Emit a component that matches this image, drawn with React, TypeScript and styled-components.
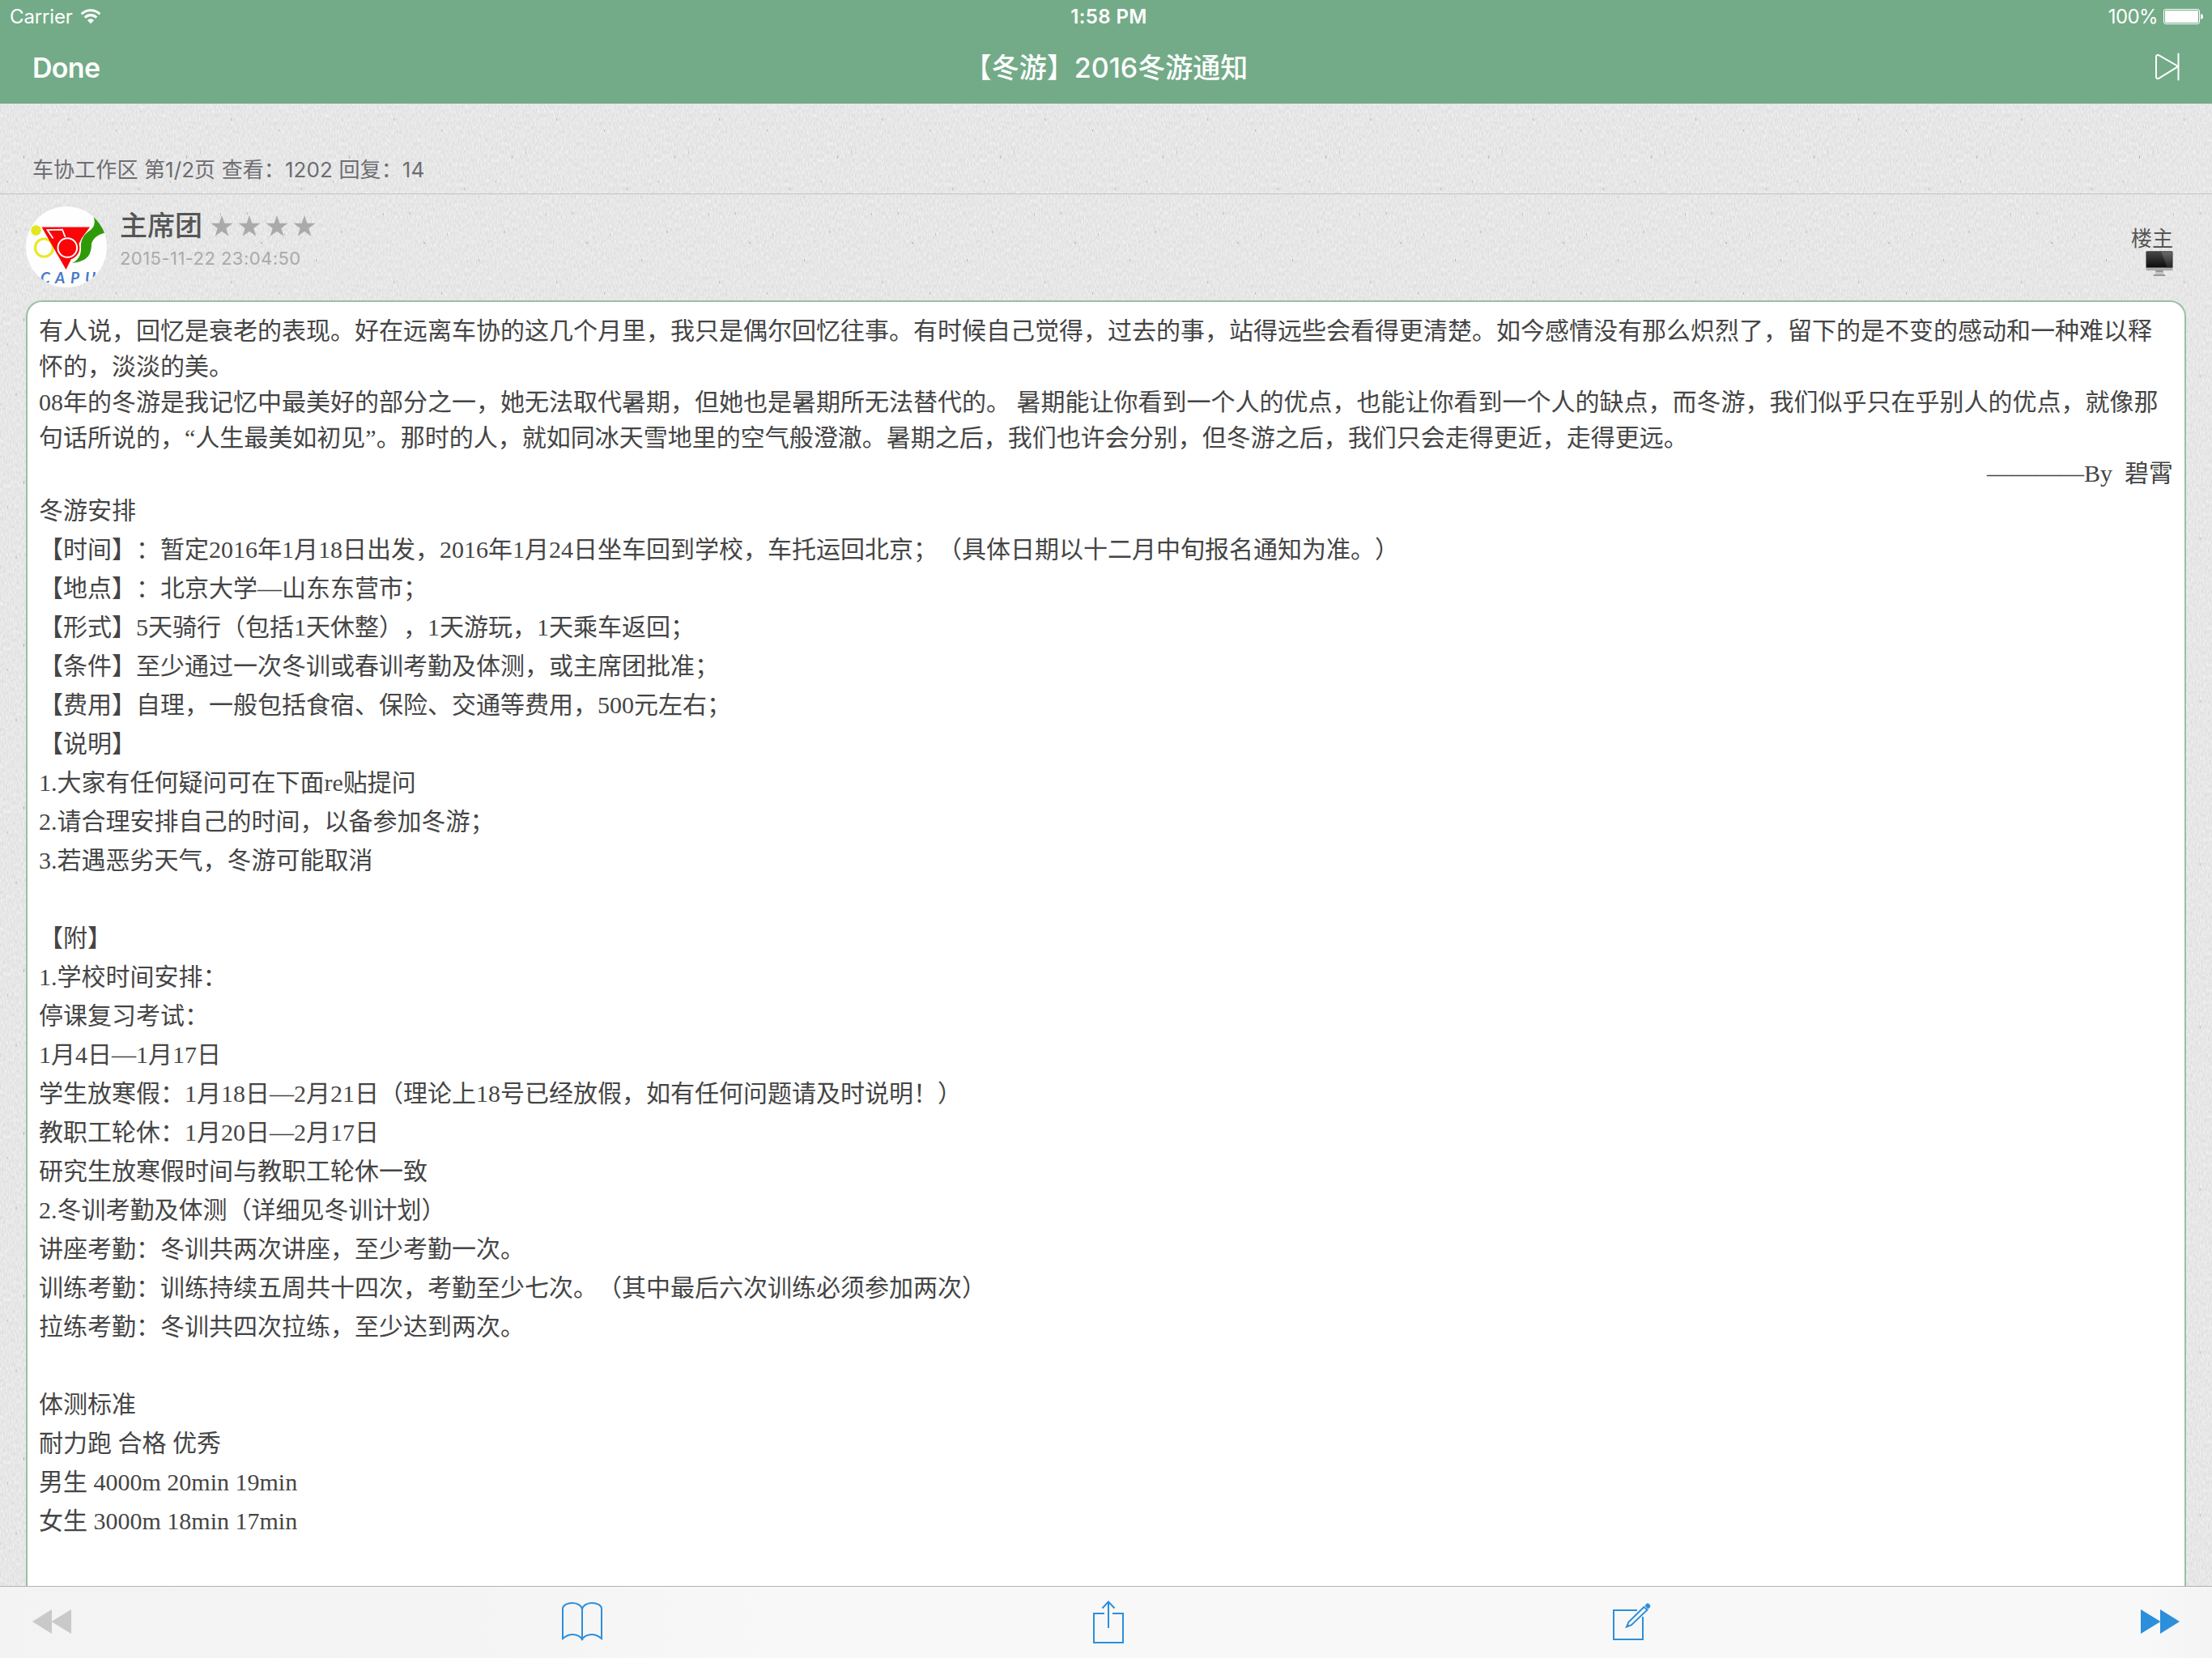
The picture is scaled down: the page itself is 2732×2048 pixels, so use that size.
import React from "react";
import styled, { createGlobalStyle } from "styled-components";

const paper = encodeURIComponent(
  `<svg xmlns="http://www.w3.org/2000/svg" width="201" height="201">
    <filter id="f" x="0" y="0" width="100%" height="100%" color-interpolation-filters="sRGB">
      <feTurbulence type="fractalNoise" baseFrequency="0.62 0.2" numOctaves="2" seed="8" stitchTiles="stitch"/>
      <feColorMatrix values="0.13 0 0 0 0.839  0.13 0 0 0 0.839  0.13 0 0 0 0.839  0 0 0 0 1"/>
    </filter>
    <rect width="201" height="201" filter="url(#f)"/>
    <g fill="#000">
      <rect x="9" y="22" width="1" height="3" opacity=".14"/><rect x="71" y="62" width="1" height="3" opacity=".2"/>
      <rect x="104" y="61" width="1" height="3" opacity=".18"/><rect x="19" y="84" width="2" height="3" opacity=".12"/>
      <rect x="150" y="87" width="1" height="3" opacity=".16"/><rect x="121" y="98" width="2" height="2" opacity=".18"/>
      <rect x="189" y="119" width="1" height="3" opacity=".2"/><rect x="46" y="186" width="1" height="4" opacity=".16"/>
      <rect x="143" y="160" width="1" height="3" opacity=".22"/><rect x="29" y="192" width="1" height="4" opacity=".2"/>
      <rect x="84" y="146" width="1" height="3" opacity=".16"/><rect x="171" y="31" width="1" height="3" opacity=".16"/>
    </g>
  </svg>`
);

const Global = createGlobalStyle`
  html, body { margin: 0; padding: 0; overflow: hidden; }
  * { box-sizing: border-box; }
`;

const ui = `Inter, "Noto Sans CJK SC", sans-serif`;
const blue = "#2c8fdc";

const Screen = styled.div`
  width: 2732px;
  height: 2048px;
  overflow: hidden;
  display: flex;
  flex-direction: column;
  background: #e6e6e6 url("data:image/svg+xml,${paper}");
  font-family: ${ui};
  text-spacing-trim: space-all;
`;

const Header = styled.header`
  flex: none;
  height: 128px;
  background: #73ab88;
  color: #fff;
`;

const Bar = styled.div<{ $h: number; $pad: string }>`
  height: ${(p) => p.$h}px;
  padding: ${(p) => p.$pad};
  display: grid;
  grid-template-columns: 1fr auto 1fr;
  align-items: center;
`;

const Side = styled.div<{ $end?: boolean; $gap?: number }>`
  display: flex;
  align-items: center;
  justify-content: ${(p) => (p.$end ? "flex-end" : "flex-start")};
  gap: ${(p) => p.$gap ?? 0}px;
`;

const StatusText = styled.span<{ $bold?: boolean; $track?: number }>`
  font-size: 24px;
  line-height: 38px;
  padding-top: 2px;
  font-weight: ${(p) => (p.$bold ? 600 : 400)};
  letter-spacing: ${(p) => p.$track ?? 0}px;
  white-space: nowrap;
`;

const Clock = styled(StatusText)`
  padding-left: 6px;
`;

const NavText = styled.span<{ $track?: number }>`
  font-size: 34px;
  line-height: 88px;
  font-weight: 600;
  letter-spacing: ${(p) => p.$track ?? 0}px;
  white-space: nowrap;
`;

const Title = styled(NavText)`
  font-weight: 500;
`;

const Info = styled.div`
  flex: none;
  height: 112px;
  padding: 64px 40px 0;
  border-bottom: 1px solid #c3c3c4;
  color: #6d6d72;
  font-size: 26px;
  line-height: 36px;
  letter-spacing: 0.1px;
  white-space: nowrap;
`;

const Author = styled.div`
  flex: none;
  height: 131px;
  padding: 15px 48px 0 32px;
  display: flex;
`;

const Avatar = styled.svg`
  flex: none;
  width: 100px;
  height: 100px;
  border-radius: 50%;
`;

const Who = styled.div`
  flex: 1;
  padding-left: 16px;
`;

const NameRow = styled.div`
  display: flex;
  align-items: center;
  height: 48px;
  gap: 10px;
`;

const Name = styled.span`
  font-size: 34px;
  line-height: 48px;
  font-weight: 500;
  color: #555;
`;

const Stars = styled.div`
  display: flex;
  gap: 6px;
`;

const Stamp = styled.div`
  margin-top: 2px;
  color: #aaa;
  font-size: 22px;
  line-height: 28px;
  letter-spacing: 0.45px;
`;

const Floor = styled.div`
  display: flex;
  flex-direction: column;
  align-items: flex-end;
  padding-top: 24px;
  color: #555;
  font-size: 26px;
  line-height: 31px;
`;

const Post = styled.article`
  flex: 1;
  min-height: 0;
  margin: 0 32px;
  padding: 14px 14px 0;
  overflow: hidden;
  background: #fff;
  border: 2px solid #98c0a6;
  border-bottom: 0;
  border-radius: 20px 20px 0 0;
  color: #454545;
  font-family: "Liberation Serif", "Noto Sans CJK SC", serif;
  font-size: 30px;
`;

const Line = styled.p<{ $loose?: boolean; $right?: boolean }>`
  margin: 0;
  height: ${(p) => (p.$loose ? 48 : 44)}px;
  line-height: ${(p) => (p.$loose ? 48 : 44)}px;
  text-align: ${(p) => (p.$right ? "right" : "left")};
  white-space: pre;
`;

const Toolbar = styled.footer`
  flex: none;
  height: 89px;
  padding: 0 40px;
  border-top: 1px solid #b2b2b2;
  background: linear-gradient(90deg, #f3f3f3 0, #f4f4f4 500px, #f8f8f8 1000px, #f8f8f8 2650px, #f4f4f4 100%);
  display: flex;
  justify-content: space-between;
`;

const ToolIcon = styled.svg`
  flex: none;
  height: 88px;
  overflow: visible;
  fill: none;
`;

const intro = [
  "有人说，回忆是衰老的表现。好在远离车协的这几个月里，我只是偶尔回忆往事。有时候自己觉得，过去的事，站得远些会看得更清楚。如今感情没有那么炽烈了，留下的是不变的感动和一种难以释",
  "怀的，淡淡的美。",
  "08年的冬游是我记忆中最美好的部分之一，她无法取代暑期，但她也是暑期所无法替代的。 暑期能让你看到一个人的优点，也能让你看到一个人的缺点，而冬游，我们似乎只在乎别人的优点，就像那",
  "句话所说的，“人生最美如初见”。那时的人，就如同冰天雪地里的空气般澄澈。暑期之后，我们也许会分别，但冬游之后，我们只会走得更近，走得更远。",
];

const body = [
  "冬游安排",
  "【时间】：暂定2016年1月18日出发，2016年1月24日坐车回到学校，车托运回北京；（具体日期以十二月中旬报名通知为准。）",
  "【地点】：北京大学—山东东营市；",
  "【形式】5天骑行（包括1天休整），1天游玩，1天乘车返回；",
  "【条件】至少通过一次冬训或春训考勤及体测，或主席团批准；",
  "【费用】自理，一般包括食宿、保险、交通等费用，500元左右；",
  "【说明】",
  "1.大家有任何疑问可在下面re贴提问",
  "2.请合理安排自己的时间，以备参加冬游；",
  "3.若遇恶劣天气，冬游可能取消",
  "",
  "【附】",
  "1.学校时间安排：",
  "停课复习考试：",
  "1月4日—1月17日",
  "学生放寒假：1月18日—2月21日（理论上18号已经放假，如有任何问题请及时说明！）",
  "教职工轮休：1月20日—2月17日",
  "研究生放寒假时间与教职工轮休一致",
  "2.冬训考勤及体测（详细见冬训计划）",
  "讲座考勤：冬训共两次讲座，至少考勤一次。",
  "训练考勤：训练持续五周共十四次，考勤至少七次。（其中最后六次训练必须参加两次）",
  "拉练考勤：冬训共四次拉练，至少达到两次。",
  "",
  "体测标准",
  "耐力跑 合格 优秀",
  "男生 4000m 20min 19min",
  "女生 3000m 18min 17min",
];

const Wifi = () => (
  <svg width="26" height="20" viewBox="0 0 26 20" fill="none" stroke="#fff" strokeWidth="3.2">
    <path d="M1.7 7.4a16 16 0 0 1 22.6 0" />
    <path d="M5.8 11.7a10.2 10.2 0 0 1 14.4 0" />
    <path d="M13 19.2 8.9 14.9a5.8 5.8 0 0 1 8.2 0z" fill="#fff" stroke="none" />
  </svg>
);

const Battery = () => (
  <svg width="49" height="19" viewBox="0 0 49 19">
    <rect x="0.5" y="0.5" width="44" height="18" rx="2.5" fill="none" stroke="#fff" />
    <rect x="2" y="2" width="41" height="15" rx="1" fill="#fff" />
    <path d="M46 6.2c2 .2 3 1.6 3 3.3s-1 3.100-3 3.300z" fill="#fff" />
  </svg>
);

const SkipToEnd = () => (
  <svg width="32" height="38" viewBox="0 0 32 38" fill="none" stroke="#fff" strokeWidth="2" strokeLinecap="round" strokeLinejoin="round">
    <path d="M3 5.500c0-2.400 1.600-3.300 3.600-2.200L28.500 16c1.300.8 1.300 1.400 0 2.200L6.600 31.700C4.600 32.800 3 32 3 29.500z" />
    <path d="M30.500 1.500v32" />
  </svg>
);

const Star = () => (
  <svg width="28" height="26" viewBox="0 0 28 26">
    <path fill="#aaa" d="M14 0l3.300 9.800H27.500L19.300 15.900l3.100 9.900L14 19.700l-8.400 6.100 3.100-9.900L.5 9.800h10.200z" />
  </svg>
);

const Club = () => (
  <Avatar viewBox="0 0 100 100">
    <rect width="100" height="100" fill="#fdfefd" />
    <path d="M82 9c9 5 14 15 15 24-7 1-14 6-16 13 0 10-3 18-12 21-4 2-8 2-12 3 8-4 11-10 11-18-1-11 4-18 12-23 6-5 6-12 2-20z" fill="#2f9a08" />
    <circle cx="12.500" cy="29.500" r="6.300" fill="#e3e61a" />
    <circle cx="22.500" cy="51" r="11" fill="none" stroke="#e6ea28" strokeWidth="3.200" />
    <path d="M19.500 25.500H79L69 39 49.500 78z" fill="#fb0508" />
    <circle cx="51.300" cy="51" r="15" fill="#fb0508" />
    <circle cx="51.300" cy="51" r="11.800" fill="none" stroke="#fff" strokeWidth="2" />
    <path d="M33.500 39.500 26.500 29l18.500-.3 3.500 9" fill="none" stroke="#fff" strokeWidth="1.800" />
    <text x="18 36 55 73" y="95" fontFamily="Lato, sans-serif" fontSize="19" fontWeight="700" fontStyle="italic" fill="#4a78c8">CAPU</text>
  </Avatar>
);

const Monitor = () => (
  <svg width="34" height="32" viewBox="0 0 34 32">
    <defs>
      <linearGradient id="glass" x1="0" y1="0" x2="0" y2="1">
        <stop offset="0" stopColor="#464646" />
        <stop offset="1" stopColor="#0c0c0c" />
      </linearGradient>
      <linearGradient id="shine" x1="0" y1="0" x2="0" y2="1">
        <stop offset="0" stopColor="#686868" />
        <stop offset="1" stopColor="#252525" />
      </linearGradient>
      <linearGradient id="chin" x1="0" y1="0" x2="0" y2="1">
        <stop offset="0" stopColor="#dcdcdc" />
        <stop offset="1" stopColor="#a8a8a8" />
      </linearGradient>
    </defs>
    <path d="M12.500 24h9l.8 6h-10.600z" fill="#c2c2c2" />
    <path d="M12.500 24h9v1.700h-9z" fill="#858585" />
    <rect x="9.500" y="29" width="15" height="2" rx=".8" fill="#999" />
    <rect x=".5" y=".3" width="33" height="24" rx="1.500" fill="url(#chin)" />
    <path d="M.5 20.500V1.500Q.5.300 2 .3h30q1.500 0 1.500 1.200v19z" fill="#333" />
    <rect x="1.300" y="1.200" width="31.400" height="19" fill="url(#glass)" />
    <path d="M19.500 1.200h13.200v19h-6z" fill="url(#shine)" />
  </svg>
);

const App = () => (
  <Screen>
    <Global />
    <Header>
      <Bar $h={40} $pad="0 11px 0 12px">
        <Side $gap={9}>
          <StatusText $track={-0.15}>Carrier</StatusText>
          <Wifi />
        </Side>
        <Clock $bold $track={0.4}>1:58 PM</Clock>
        <Side $end $gap={7}>
          <StatusText $track={-0.6}>100%</StatusText>
          <Battery />
        </Side>
      </Bar>
      <Bar $h={88} $pad="0 40px">
        <Side>
          <NavText $track={-0.7}>Done</NavText>
        </Side>
        <Title>【冬游】2016冬游通知</Title>
        <Side $end>
          <SkipToEnd />
        </Side>
      </Bar>
    </Header>
    <Info>车协工作区 第1/2页 查看：1202 回复：14</Info>
    <Author>
      <Club />
      <Who>
        <NameRow>
          <Name>主席团</Name>
          <Stars>
            {[0, 1, 2, 3].map((n) => (
              <Star key={n} />
            ))}
          </Stars>
        </NameRow>
        <Stamp>2015-11-22 23:04:50</Stamp>
      </Who>
      <Floor>
        楼主
        <Monitor />
      </Floor>
    </Author>
    <Post>
      {intro.map((t, i) => (
        <Line key={i}>{t}</Line>
      ))}
      <Line $right>{"————By  碧霄"}</Line>
      {body.map((t, i) => (
        <Line key={i} $loose>
          {t}
        </Line>
      ))}
    </Post>
    <Toolbar>
      <ToolIcon width="48" viewBox="0 0 48 88">
        <path d="M0 43 24 28v30zM23.500 43 48 28v30z" fill="#c9c9c9" />
      </ToolIcon>
      <ToolIcon width="52" viewBox="0 0 52 88" stroke={blue} strokeWidth="2">
        <path d="M2 64V27c0-4.500 6-7 12-7s12 3.500 12 9c0-5.500 6-9 12-9s12 2.500 12 7v37c-4-3.500-8.500-5-12.500-5S27 61 26 66c-1-5-7.500-7-11.500-7S6 60.500 2 64zM26 28v38" />
      </ToolIcon>
      <ToolIcon width="38" viewBox="0 0 38 88" stroke={blue} strokeWidth="2">
        <path d="M14 33H1v36h36V33H24M19 51V19M11.500 26.500 19 18.500l7.500 8" />
      </ToolIcon>
      <ToolIcon width="46" viewBox="0 0 46 88" stroke={blue} strokeWidth="2">
        <path d="M29 29H0v36h36V37" />
        <path d="M37.500 25 18.500 43.500 16 49.500l6-2.300L41.500 28.500z" />
        <path d="M15 50.500l2-4.500 2.500 2.500z" fill={blue} stroke="none" />
        <path d="M38.500 23.500l2-2.500c1-1 2.600-.4 3.800.8s1.400 2.700.4 3.700L42.500 27.500z" fill={blue} stroke="none" />
      </ToolIcon>
      <ToolIcon width="48" viewBox="0 0 48 88">
        <path d="M48 43 24 28v30zM24.500 43 0 28v30z" fill={blue} />
      </ToolIcon>
    </Toolbar>
  </Screen>
);

export default App;
